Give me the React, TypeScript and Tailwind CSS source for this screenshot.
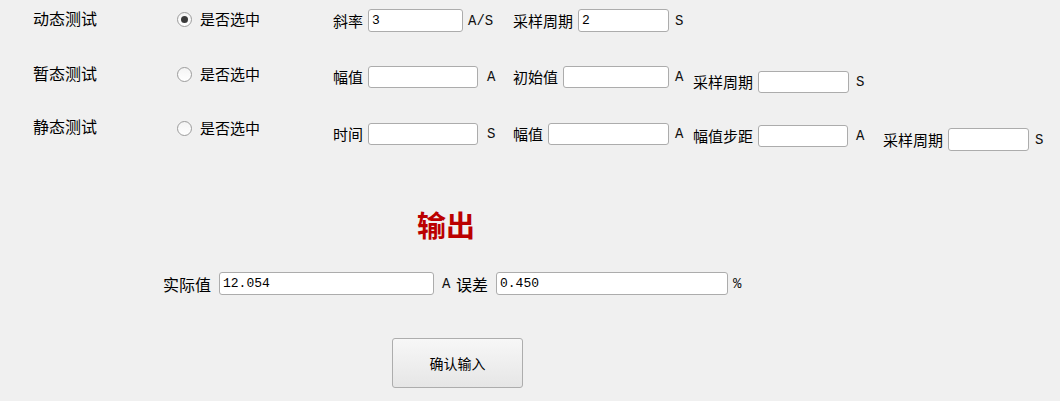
import React from "react";

const cjk = "font-['Noto_Sans_CJK_SC',sans-serif]";
const mono = "font-['Liberation_Mono',monospace]";

function Field({
  label,
  labelW,
  inputW,
  inputH,
  value,
  unit,
  unitMl,
  wrap,
}: {
  label: string;
  labelW: string;
  inputW: string;
  inputH: string;
  value?: string;
  unit: string;
  unitMl: string;
  wrap: string;
}) {
  return (
    <div className={`flex shrink-0 items-center ${wrap}`}>
      <span className={`${labelW} shrink-0 text-[15px] leading-[22px] text-black whitespace-nowrap ${cjk}`}>
        {label}
      </span>
      <input
        readOnly
        defaultValue={value ?? ""}
        className={`${inputW} ${inputH} shrink-0 rounded-[3px] border border-[#acacac] bg-white px-[3px] text-[13px] text-black outline-none ${mono}`}
      />
      <span className={`${unitMl} text-[14px] leading-[20px] text-[#111] ${mono}`}>{unit}</span>
    </div>
  );
}

function Radio({ checked, wrap }: { checked?: boolean; wrap: string }) {
  return (
    <div className={`flex w-[156px] shrink-0 items-center ${wrap}`}>
      <span className="flex h-[15px] w-[15px] items-center justify-center rounded-full border border-[#9c9c9c] bg-linear-to-b from-[#f4f4f4] to-white">
        {checked && <span className="h-[7px] w-[7px] rounded-full bg-[#3a3a3a]" />}
      </span>
      <span className={`ml-[8px] text-[15px] leading-[22px] text-black ${cjk}`}>是否选中</span>
    </div>
  );
}

function RowLabel({ text, wrap }: { text: string; wrap: string }) {
  return (
    <div className={`w-[144px] shrink-0 text-[16px] leading-[22px] text-black ${cjk} ${wrap}`}>{text}</div>
  );
}

export default function App() {
  return (
    <div className={`h-[401px] w-[1060px] overflow-hidden bg-[#f0f0f0] ${cjk}`}>
      <div className="flex h-[152px] flex-col">
        {/* Row 1 */}
        <div className="flex h-[60px] items-start pl-[33px]">
          <RowLabel text="动态测试" wrap="mt-[7px]" />
          <Radio checked wrap="mt-[8px]" />
          <Field label="斜率" labelW="w-[35px]" inputW="w-[95px]" inputH="h-[23px]" value="3" unit="A/S" unitMl="ml-[5px]" wrap="w-[180px] mt-[9px]" />
          <Field label="采样周期" labelW="w-[65px]" inputW="w-[91px]" inputH="h-[23px]" value="2" unit="S" unitMl="ml-[6px]" wrap="w-[180px] mt-[9px]" />
        </div>
        {/* Row 2 */}
        <div className="flex h-[52px] items-start pl-[33px]">
          <RowLabel text="暂态测试" wrap="mt-[2px]" />
          <Radio wrap="mt-[3px]" />
          <Field label="幅值" labelW="w-[35px]" inputW="w-[110px]" inputH="h-[22px]" unit="A" unitMl="ml-[9px]" wrap="w-[180px] mt-[6px]" />
          <Field label="初始值" labelW="w-[50px]" inputW="w-[106px]" inputH="h-[22px]" unit="A" unitMl="ml-[6px]" wrap="w-[180px] mt-[6px]" />
          <Field label="采样周期" labelW="w-[65px]" inputW="w-[91px]" inputH="h-[22px]" unit="S" unitMl="ml-[7px]" wrap="w-[190px] mt-[11px]" />
        </div>
        {/* Row 3 */}
        <div className="flex h-[40px] items-start pl-[33px]">
          <RowLabel text="静态测试" wrap="mt-[3px]" />
          <Radio wrap="mt-[5px]" />
          <Field label="时间" labelW="w-[35px]" inputW="w-[110px]" inputH="h-[22px]" unit="S" unitMl="ml-[9px]" wrap="w-[180px] mt-[11px]" />
          <Field label="幅值" labelW="w-[35px]" inputW="w-[121px]" inputH="h-[22px]" unit="A" unitMl="ml-[6px]" wrap="w-[180px] mt-[11px]" />
          <Field label="幅值步距" labelW="w-[65px]" inputW="w-[90px]" inputH="h-[22px]" unit="A" unitMl="ml-[8px]" wrap="w-[190px] mt-[13px]" />
          <Field label="采样周期" labelW="w-[65px]" inputW="w-[81px]" inputH="h-[23px]" unit="S" unitMl="ml-[6px]" wrap="w-[170px] mt-[16px]" />
        </div>
      </div>

      {/* Output title */}
      <div className="mt-[54px] ml-[417px] h-[36px] w-[64px] text-[29px] font-bold leading-[36px] text-[#bb0000]">
        输出
      </div>

      {/* Output row */}
      <div className="mt-[30px] ml-[163px] flex h-[23px] items-center">
        <span className="w-[56px] shrink-0 text-[16px] leading-[22px] text-black">实际值</span>
        <input
          readOnly
          defaultValue="12.054"
          className={`h-[23px] w-[215px] shrink-0 rounded-[3px] border border-[#acacac] bg-white px-[3px] text-[13px] text-black outline-none ${mono}`}
        />
        <span className={`ml-[8px] w-[14px] text-[14px] leading-[20px] text-[#111] ${mono}`}>A</span>
        <span className="w-[40px] shrink-0 text-[16px] leading-[22px] text-black">误差</span>
        <input
          readOnly
          defaultValue="0.450"
          className={`h-[23px] w-[232px] shrink-0 rounded-[3px] border border-[#acacac] bg-white px-[3px] text-[13px] text-black outline-none ${mono}`}
        />
        <span className={`ml-[5px] text-[14px] leading-[20px] text-[#111] ${mono}`}>%</span>
      </div>

      {/* Button */}
      <button
        type="button"
        className="mt-[43px] ml-[392px] flex h-[50px] w-[131px] items-center justify-center rounded-[3px] border border-[#adadad] bg-linear-to-b from-[#f7f7f7] to-[#e6e6e6] text-[14px] text-black"
      >
        确认输入
      </button>
    </div>
  );
}
